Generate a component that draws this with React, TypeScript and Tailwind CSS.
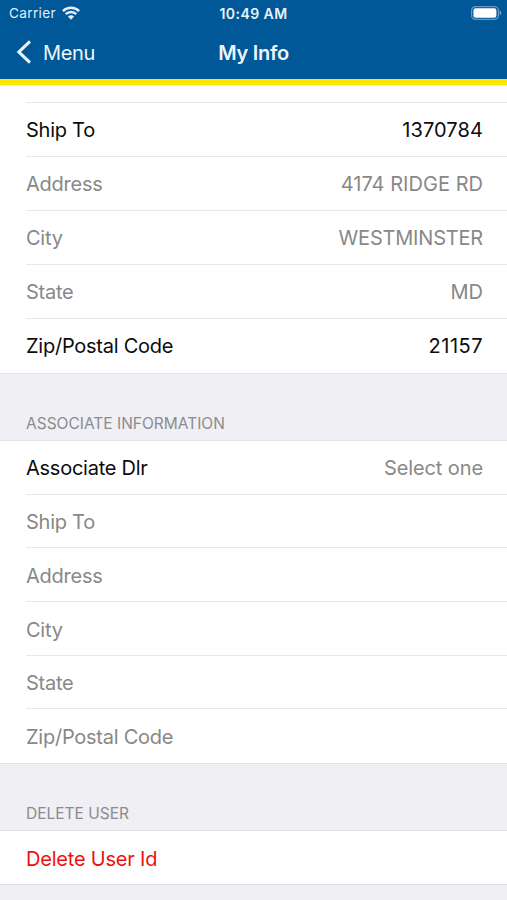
type Field = {
  label: string;
  value?: string;
  active?: boolean;
  placeholder?: boolean;
  valueClass?: string;
};

const shipToFields: Field[] = [
  { label: "Ship To", value: "1370784", active: true, valueClass: "tracking-[0.1px]" },
  { label: "Address", value: "4174 RIDGE RD", valueClass: "tracking-[0.03px]" },
  { label: "City", value: "WESTMINSTER", valueClass: "tracking-[-0.2px]" },
  { label: "State", value: "MD", valueClass: "tracking-normal" },
  { label: "Zip/Postal Code", value: "21157", active: true, valueClass: "tracking-[0.5px]" },
];

const associateFields: Field[] = [
  { label: "Associate Dlr", value: "Select one", active: true, placeholder: true, valueClass: "tracking-[-0.1px]" },
  { label: "Ship To" },
  { label: "Address" },
  { label: "City" },
  { label: "State" },
  { label: "Zip/Postal Code" },
];

function WifiIcon() {
  return (
    <svg aria-hidden="true" className="-mt-0.5 h-[14px] w-[18px]" fill="none" viewBox="0 0 18 14">
      <path d="M.9 5.1C5.4.6 12.6.6 17.1 5.1" stroke="currentColor" strokeWidth="2.5" />
      <path d="M3.7 8.2C6.7 5.2 11.3 5.2 14.3 8.2" stroke="currentColor" strokeWidth="2.4" />
      <path d="M9 13.8 5.9 10.6C7.7 8.9 10.3 8.9 12.1 10.6Z" fill="currentColor" />
    </svg>
  );
}

function BatteryIcon() {
  return (
    <svg aria-hidden="true" className="-mt-0.5 h-[14px] w-[31px]" fill="none" viewBox="0 0 31 14">
      <rect x="0.6" y="0.6" width="26.8" height="12.8" rx="4" stroke="white" strokeOpacity="0.4" strokeWidth="1.2" />
      <rect x="2.4" y="2.3" width="23" height="9.4" rx="2.2" fill="white" />
      <path d="M28.6 4.6C30.9 5.5 30.9 8.5 28.6 9.4Z" fill="white" fillOpacity="0.45" />
    </svg>
  );
}

function BackIcon() {
  return (
    <svg aria-hidden="true" className="-mt-px h-6 w-[15px]" fill="none" viewBox="0 0 15 24">
      <path d="M14 1.4 2.9 12 14 22.6" stroke="currentColor" strokeWidth="3.1" />
    </svg>
  );
}

function StatusBar() {
  return (
    <div className="grid h-7 grid-cols-[1fr_auto_1fr] items-center text-[13.6px] leading-none">
      <div className="flex items-center gap-[6px] pl-[9px] text-[#e3eef7]">
        <span className="tracking-[0.35px]">Carrier</span>
        <WifiIcon />
      </div>
      <span className="text-center text-[14px] font-semibold tracking-[0.45px] text-[#e9f2f9]">10:49 AM</span>
      <div className="flex justify-end pr-[5px]">
        <BatteryIcon />
      </div>
    </div>
  );
}

function NavBar() {
  return (
    <div className="grid h-[49px] grid-cols-[1fr_auto_1fr] items-center text-[20px] leading-none">
      <button className="flex items-center gap-3 pl-4 text-[#eef5fa]">
        <BackIcon />
        <span className="tracking-[-0.35px]">Menu</span>
      </button>
      <h1 className="text-center font-semibold tracking-[-0.3px] text-[#eef5fa]">My Info</h1>
    </div>
  );
}

function FieldRow({ field, last, className }: { field: Field; last: boolean; className: string }) {
  const valueColor = field.active && !field.placeholder ? "text-[#0c0c0c]" : "text-[#888888]";
  return (
    <li className={`ml-[26px] flex flex-1 items-center justify-between border-b pr-6 ${last ? "border-transparent" : "border-[#e9e9e9]"} ${className}`}>
      <span className={field.active ? "text-[#0c0c0c]" : "text-[#888888]"}>{field.label}</span>
      <span className={`${valueColor} ${field.valueClass ?? ""}`}>{field.value}</span>
    </li>
  );
}

function SectionHeader({ title }: { title: string }) {
  return (
    <h2 className="flex h-[68px] shrink-0 items-end border-y border-[#e2e2e5] bg-[#efeff4] pb-[7px] pl-[26px] text-[15.5px] leading-[18px] text-[#8b8b90]">
      {title}
    </h2>
  );
}

export default function App() {
  return (
    <main className="flex h-[900px] w-[507px] flex-col overflow-hidden bg-[#efeff4] font-['Inter','Liberation_Sans',sans-serif]">
      <header className="h-[85px] shrink-0 border-b-[6px] border-[#ffe600] bg-[#005898]">
        <StatusBar />
        <NavBar />
      </header>
      <div className="h-[18px] shrink-0 bg-white pl-[26px]">
        <div className="h-full border-b border-[#e9e9e9]" />
      </div>
      <ul className="flex h-[270px] shrink-0 flex-col bg-white text-[20px] leading-6 tracking-[-0.25px]">
        {shipToFields.map((field, i) => (
          <FieldRow key={field.label} field={field} last={i === shipToFields.length - 1} className="pt-[1.5px]" />
        ))}
      </ul>
      <SectionHeader title="ASSOCIATE INFORMATION" />
      <ul className="flex h-[322px] shrink-0 flex-col bg-white text-[20px] leading-6 tracking-[-0.25px]">
        {associateFields.map((field, i) => (
          <FieldRow key={field.label} field={field} last={i === associateFields.length - 1} className="pt-[2.3px]" />
        ))}
      </ul>
      <SectionHeader title="DELETE USER" />
      <button className="flex h-[54px] shrink-0 items-center border-b border-[#e2e2e5] bg-white pt-[2px] pl-[26px] text-[20px] leading-6 tracking-[-0.2px] text-[#ee1010]">
        Delete User Id
      </button>
    </main>
  );
}
